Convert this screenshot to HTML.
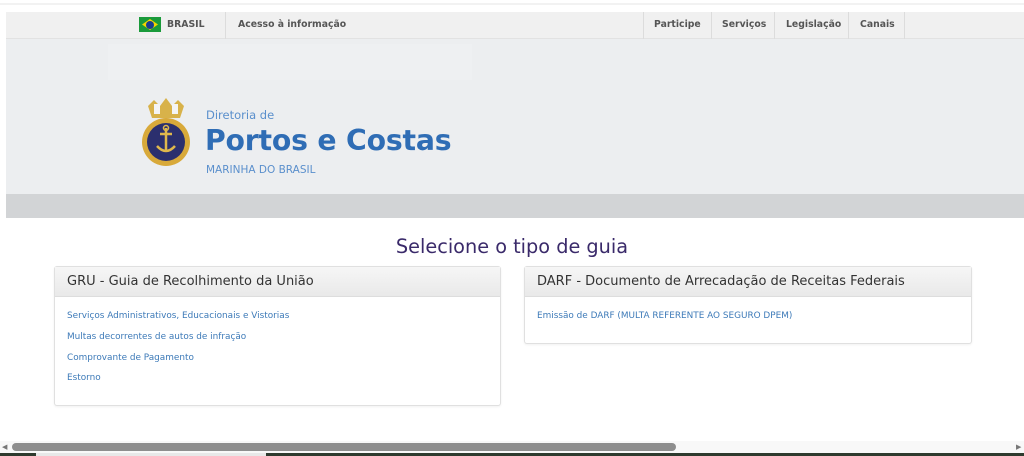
<!DOCTYPE html>
<html><head><meta charset="utf-8"><style>
*{margin:0;padding:0;box-sizing:border-box}
body{width:1024px;height:456px;overflow:hidden;background:#fff;font-family:"DejaVu Sans","Liberation Sans",sans-serif;position:relative}
.abs{position:absolute}
.top{left:6px;top:12px;width:1018px;height:27px;background:#f0f0f0;border-bottom:1px solid #e2e2e2}
.tb{font-size:9.3px;font-weight:bold;color:#555;top:19px}
.sep{top:12px;width:1px;height:27px;background:#dcdcdc}
.banner{left:6px;top:39px;width:1018px;height:155px;background:#eceef0}
.strip{left:6px;top:194px;width:1018px;height:24px;background:#d2d4d6}
.card{border:1px solid #e0e0e0;border-radius:3px;background:#fff;box-shadow:0 1px 2px rgba(0,0,0,.06)}
.ch{height:30px;background:linear-gradient(#f6f6f6,#e9e9e9);border-bottom:1px solid #ddd;font-size:13px;color:#333;padding:7px 12px}
.lk{font-size:8.9px;color:#3d7ab8;position:absolute;left:12px}
</style></head><body>
<div class="abs" style="left:0;top:3px;width:1024px;height:2px;background:#f2f2f2"></div>
<div class="abs top"></div>
<div class="abs" style="left:139px;top:17px;width:22px;height:15px;background:#1a9a3a"></div>
<div class="abs" style="left:142px;top:19px;width:16px;height:11px;background:#f5d400;clip-path:polygon(50% 0,100% 50%,50% 100%,0 50%)"></div>
<div class="abs" style="left:146px;top:20.5px;width:8px;height:8px;border-radius:50%;background:#1a3d8f"></div>
<div class="abs tb" style="left:167px">BRASIL</div>
<div class="abs sep" style="left:225px"></div>
<div class="abs tb" style="left:238px">Acesso à informação</div>
<div class="abs sep" style="left:643px"></div>
<div class="abs tb" style="left:654px">Participe</div>
<div class="abs sep" style="left:711px"></div>
<div class="abs tb" style="left:722px">Serviços</div>
<div class="abs sep" style="left:774px"></div>
<div class="abs tb" style="left:786px">Legislação</div>
<div class="abs sep" style="left:848px"></div>
<div class="abs tb" style="left:860px">Canais</div>
<div class="abs sep" style="left:904px"></div>
<div class="abs banner"></div>
<div class="abs" style="left:108px;top:44px;width:364px;height:36px;background:#eef0f2"></div>
<div class="abs strip"></div>
<svg class="abs" style="left:140px;top:96px" width="52" height="74" viewBox="0 0 52 74">
<path d="M8 10 L14 4 L20 10 L26 2 L32 10 L38 4 L44 10 L40 22 L12 22 Z" fill="#d8b24a"/>
<rect x="14" y="8" width="6" height="10" fill="#f4f4f4"/><rect x="32" y="8" width="6" height="10" fill="#f4f4f4"/>
<circle cx="26" cy="46" r="24" fill="#d8a93a"/>
<circle cx="26" cy="46" r="19" fill="#2b2f6e"/>
<path d="M26 32 v24 M20 38 h12 M17 50 q9 10 18 0" stroke="#e0b84c" stroke-width="2.5" fill="none"/>
<circle cx="26" cy="32" r="2.5" fill="none" stroke="#e0b84c" stroke-width="1.5"/>
</svg>
<div class="abs" style="left:206px;top:108px;font-size:11.5px;color:#5a8fcc">Diretoria de</div>
<div class="abs" style="left:205px;top:124px;font-size:28.3px;font-weight:bold;color:#2f6db5;letter-spacing:-0.2px">Portos e Costas</div>
<div class="abs" style="left:206px;top:164px;font-size:10.5px;color:#5a8fcc">MARINHA DO BRASIL</div>
<div class="abs" style="left:0;top:235px;width:1024px;text-align:center;font-size:19.3px;color:#3a2a6a">Selecione o tipo de guia</div>
<div class="abs card" style="left:54px;top:266px;width:447px;height:140px">
<div class="ch">GRU - Guia de Recolhimento da União</div>
<div class="lk" style="top:44px">Serviços Administrativos, Educacionais e Vistorias</div>
<div class="lk" style="top:65px">Multas decorrentes de autos de infração</div>
<div class="lk" style="top:86px">Comprovante de Pagamento</div>
<div class="lk" style="top:106px">Estorno</div>
</div>
<div class="abs card" style="left:524px;top:266px;width:448px;height:78px">
<div class="ch">DARF - Documento de Arrecadação de Receitas Federais</div>
<div class="lk" style="top:44px">Emissão de DARF (MULTA REFERENTE AO SEGURO DPEM)</div>
</div>
<div class="abs" style="left:0;top:441px;width:1024px;height:12px;background:#f8f8f8"></div>
<div class="abs" style="left:12px;top:443px;width:664px;height:8px;border-radius:4px;background:#8e8e8e"></div>
<div class="abs" style="left:2px;top:443px;font-size:7px;color:#777">◀</div>
<div class="abs" style="left:1016px;top:443px;font-size:7px;color:#777">▶</div>
<div class="abs" style="left:0;top:453px;width:1024px;height:3px;background:#2e3a2e"></div>
<div class="abs" style="left:36px;top:453px;width:230px;height:3px;background:#e8e8e8"></div>
</body></html>
